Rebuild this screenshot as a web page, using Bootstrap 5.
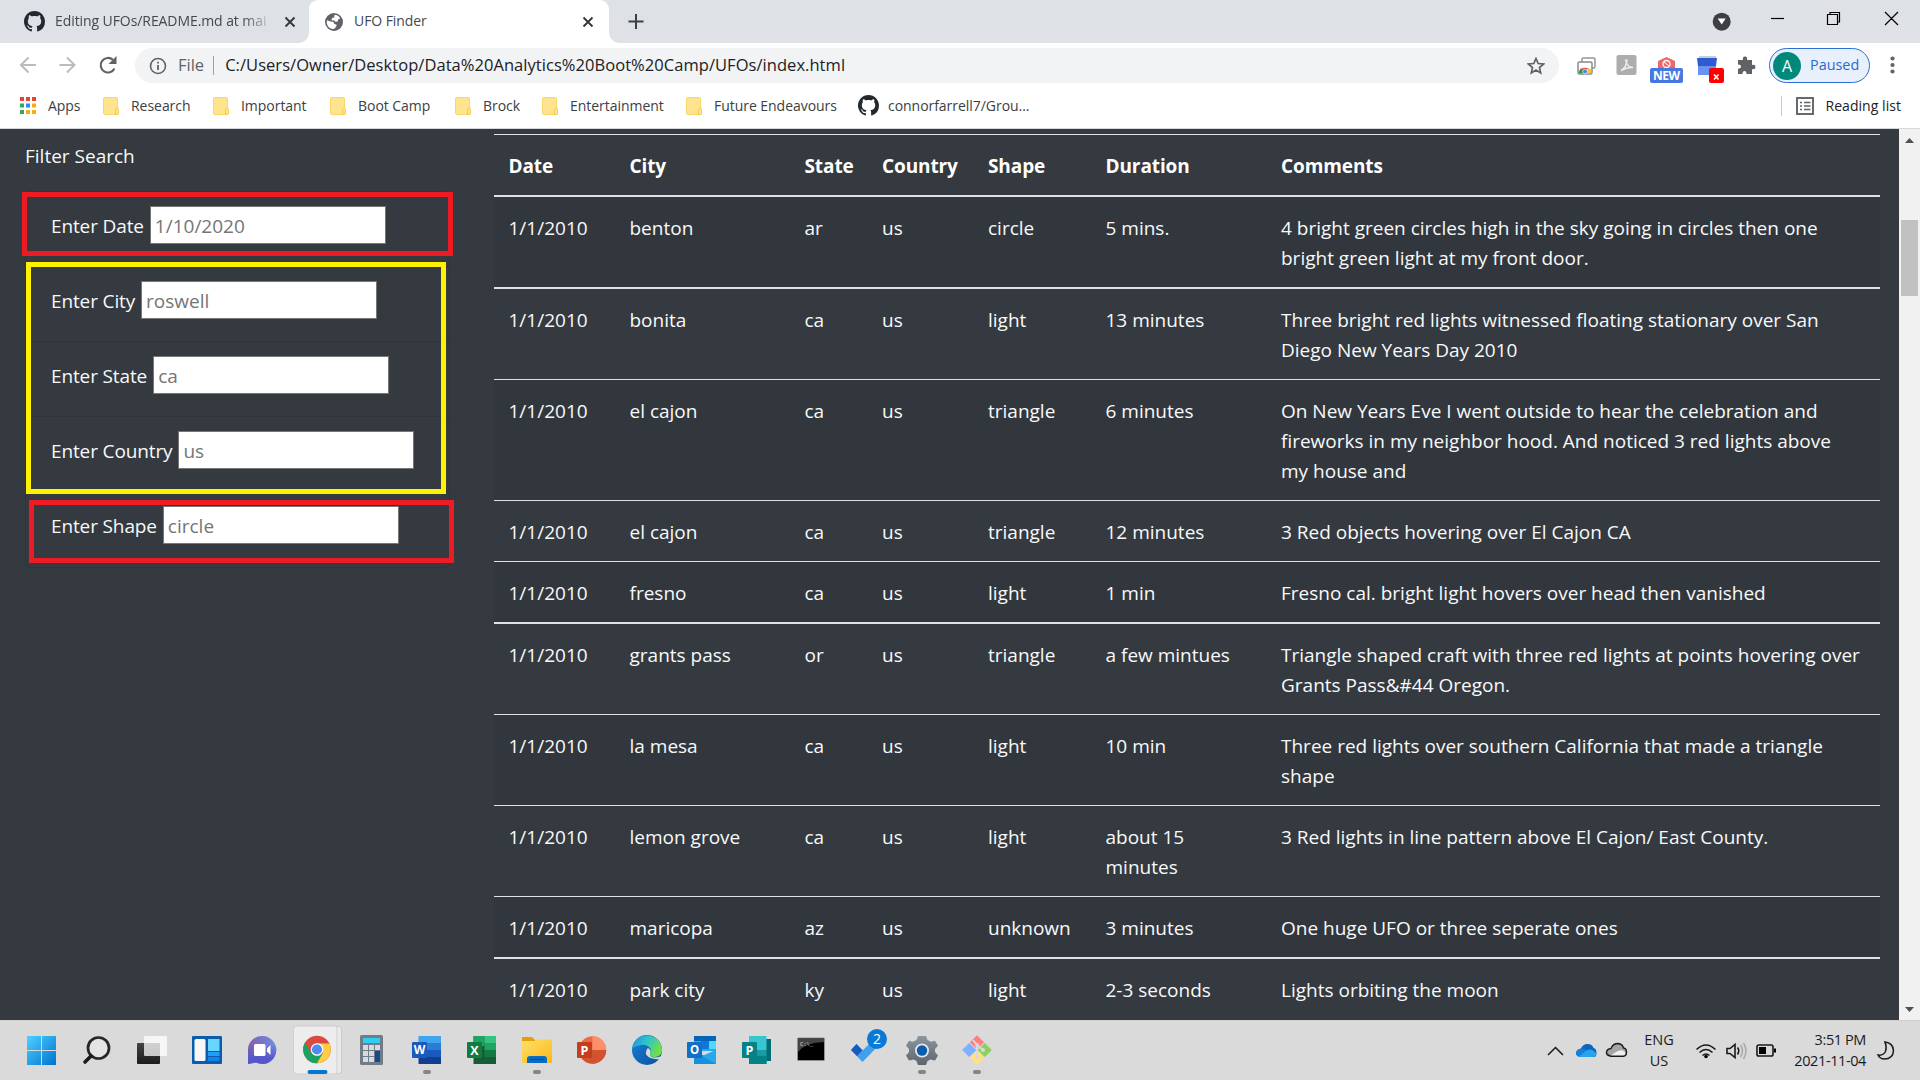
<!DOCTYPE html>
<html lang="en">
<head>
<meta charset="utf-8">
<title>UFO Finder</title>
<link href="https://cdn.jsdelivr.net/npm/bootstrap@5.3.0/dist/css/bootstrap.min.css" rel="stylesheet">
<style>
body{width:1920px;height:1080px;overflow:hidden;font-family:"Open Sans","Noto Sans",sans-serif;background:#343a40;color:#f8f9fa}
svg{display:block;flex:none}
.tabstrip{height:43px;background:#dee1e6;color:#45494d;font-size:14px}
.tab-idle{width:309px;padding-left:24px}
.tab-live{width:300px;background:#fff;border-radius:9px 9px 0 0;padding-left:15px;position:relative}
.tab-live::before,.tab-live::after{content:"";position:absolute;bottom:0;width:10px;height:10px}
.tab-live::before{left:-10px;background:radial-gradient(circle at 0 0,#dee1e6 9.5px,#fff 10px)}
.tab-live::after{right:-10px;background:radial-gradient(circle at 100% 0,#dee1e6 9.5px,#fff 10px)}
.tab-text{white-space:nowrap;overflow:hidden;line-height:22px;letter-spacing:-.08px;margin-left:10px;position:relative;top:-1px}
.fade-text{width:219px;-webkit-mask-image:linear-gradient(90deg,#000 188px,transparent 219px);mask-image:linear-gradient(90deg,#000 188px,transparent 219px)}
.tab-idle .tab-x{margin-left:10px}
.tab-live .tab-x{margin-right:15px}
.toolbar{height:45px;background:#fff;color:#202124}
.omnibox{width:1424px;height:35px;border-radius:18px;background:#f1f3f4;padding-left:14px;font-size:16.5px;white-space:nowrap}
.scheme{margin-left:11px;color:#5f6368}
.url-sep{width:1px;height:19px;background:#9aa0a6;margin:0 11px 0 9px}
.url{letter-spacing:.05px}
.star{margin-right:14px}
.pill{width:101px;height:35px;border:1.4px solid #2b6fd6;border-radius:18px;background:#e8f0fb;color:#2a6ad0;font-size:14.4px}
.pill-text{margin:-2px 0 0 9px}
.avatar{width:28px;height:28px;border-radius:50%;background:#00897b;color:#fff;font-size:16px;margin-left:3px}
.bookmarks{height:41px;background:#fff;border-bottom:1px solid #d5d7da;color:#3c4043;font-size:14px;padding:0 19px 5px 19px}
.bm-grid{display:grid;grid-template-columns:84px 110px 117px 125px 87px 144px 172px auto;white-space:nowrap;letter-spacing:-.04px}
.bm-grid>div{display:flex;align-items:center;gap:12px}
.bm-grid>.bm-repo{gap:9px}
.reading{color:#202124;letter-spacing:.05px}
.page-area{height:891px;font-size:19px;line-height:30px;background:#343a40}
.side{width:494px;padding:12px 0 0 25px;position:relative}
.side-title{height:49px}
.filter-box{width:425px;border:1px solid #2f343a;border-radius:5px;margin-top:1px}
.filter-row{height:75px;padding:14px 0 0 25px;border-bottom:1px solid #2f343a}
.filter-row:last-child{border-bottom:0}
.filter-row label{line-height:38px;padding-top:1px;margin-right:6px;white-space:nowrap;letter-spacing:-.13px}
.filter-row input{width:236px;height:38px;border:1.5px solid #767676;border-radius:0;padding:2px 4px 0;background:#fff;font:inherit;line-height:30px}
.filter-row input::placeholder{color:#757575;opacity:1}
.outline{position:absolute;border:5px solid #ed1c24;pointer-events:none}
.o1{left:22px;top:63px;width:431px;height:64px}
.o2{left:26px;top:133px;width:420px;height:232px;border-color:#fff200}
.o3{left:29px;top:371px;width:425px;height:63px}
.sight{width:1386px;margin-top:5px;table-layout:fixed;border-collapse:separate;border-spacing:0}
.sight th,.sight td{padding:16px 0 14px 14.5px;border-top:1px solid #dee2e6;vertical-align:top;white-space:nowrap;font-weight:400}
.sight th{font-weight:700;color:#fff;letter-spacing:-.1px}
.sight .thick td{border-top-width:2px}
.sight tbody tr:nth-child(odd){background:#32373d}
.c-date{width:121px}.c-city{width:175px}.c-state{width:77.5px}.c-country{width:106px}.c-shape{width:117.5px}.c-dur{width:175.5px}
.scroller{width:21px;background:#f1f1f1;padding-top:9px}
.thumb{width:17px;height:76px;margin:77px 0 711px 2px;background:#c1c1c1}
.taskbar{height:60px;background:#dadada;color:#1a1a1a;padding-left:14px;border-top:1px solid #cfcfcf}
.taskbar svg.app{margin-top:-1px}
.tray{font-size:14.5px;line-height:20.5px}
.tray-apps{overflow:visible}
.lang{width:66px}
.clock{width:78px;white-space:nowrap;letter-spacing:-.4px}
</style>
<script src="https://cdn.jsdelivr.net/npm/bootstrap@5.3.0/dist/js/bootstrap.bundle.min.js"></script>
</head>
<body>
<svg width="0" height="0" class="position-absolute">
<defs>
<symbol id="octo" viewBox="0 0 16 16"><path fill="#24292f" d="M8 0C3.58 0 0 3.58 0 8c0 3.54 2.29 6.53 5.47 7.59.4.07.55-.17.55-.38 0-.19-.01-.82-.01-1.49-2.01.37-2.53-.49-2.69-.94-.09-.23-.48-.94-.82-1.13-.28-.15-.68-.52-.01-.53.63-.01 1.08.58 1.23.82.72 1.21 1.87.87 2.33.66.07-.52.28-.87.51-1.07-1.78-.2-3.64-.89-3.64-3.95 0-.87.31-1.59.82-2.15-.08-.2-.36-1.02.08-2.12 0 0 .67-.21 2.2.82.64-.18 1.32-.27 2-.27s1.36.09 2 .27c1.53-1.04 2.2-.82 2.2-.82.44 1.1.16 1.92.08 2.12.51.56.82 1.27.82 2.15 0 3.07-1.87 3.75-3.65 3.95.29.25.54.73.54 1.48 0 1.07-.01 1.93-.01 2.2 0 .21.15.46.55.38A8.01 8.01 0 0 0 16 8c0-4.42-3.58-8-8-8z"/></symbol>
<symbol id="fold" viewBox="0 0 16 18"><rect x=".5" y=".5" width="14" height="17" rx="1.5" fill="#ffe48f" stroke="#fad764"/><path d="M12.5 17.5v-5q0-1.5 1.5-1.5t1.5 1.5v3.500q0 1.500-1.500 1.500z" fill="#ffe48f" stroke="#f5cc4e"/></symbol>
<symbol id="cross" viewBox="0 0 12 12"><path d="M1.500 1.500l9 9M10.500 1.500l-9 9" stroke="#35383b" stroke-width="1.900" fill="none"/></symbol>
<linearGradient id="wg" x1="0" y1="0" x2="1" y2="1"><stop offset="0" stop-color="#4fd0ff"/><stop offset="1" stop-color="#0073d0"/></linearGradient>
<linearGradient id="chatg" x1="0" y1="0" x2="1" y2="0"><stop offset="0" stop-color="#8360a8"/><stop offset="1" stop-color="#6d8de8"/></linearGradient>
<linearGradient id="chatb" x1="0" y1="0" x2="0" y2="1"><stop offset=".3" stop-color="#5756c8" stop-opacity="0"/><stop offset=".8" stop-color="#5558cc"/></linearGradient>
<linearGradient id="fg" x1="0" y1="0" x2="1" y2="1"><stop offset="0" stop-color="#ffdf6d"/><stop offset="1" stop-color="#fbb914"/></linearGradient>
<linearGradient id="eg" x1="0" y1="0" x2="1" y2=".4"><stop offset="0" stop-color="#1a8ed8"/><stop offset=".5" stop-color="#2fc2d0"/><stop offset="1" stop-color="#6be04a"/></linearGradient>
<linearGradient id="eb" x1="0" y1="0" x2="1" y2="1"><stop offset="0" stop-color="#1683dd"/><stop offset="1" stop-color="#0c4f99"/></linearGradient>
<linearGradient id="gg" x1="0" y1="0" x2="0" y2="1"><stop offset="0" stop-color="#8d969e"/><stop offset="1" stop-color="#5d666f"/></linearGradient>
<linearGradient id="dk" x1="0" y1="0" x2="0" y2="1"><stop offset="0" stop-color="#444"/><stop offset="1" stop-color="#1c1c1c"/></linearGradient>
</defs>
</svg>

<header>
<div class="tabstrip d-flex">
  <div class="tab-idle d-flex align-items-center">
    <svg width="21" height="21"><use href="#octo"/></svg>
    <div class="tab-text fade-text">Editing UFOs/README.md at mai</div>
    <svg class="tab-x" width="12" height="12"><use href="#cross"/></svg>
  </div>
  <div class="tab-live d-flex align-items-center">
    <svg width="20" height="20" viewBox="0 0 20 20"><circle cx="10" cy="10" r="9" fill="#5f6368"/><path fill="#fff" d="M10.500 2.800q3.800.2 5.800 3.600l-2 .8-.6 2.300-2.400.2-1.500-1.400-2.300.3.500-2.500 2.200-.6zM2.900 8.200l3.600 1.300 2.600.300 1.400 2.200 2 .400-.2 2.200-2.200 2.500q-5.800.200-7.300-5.600z"/></svg>
    <div class="tab-text flex-grow-1">UFO Finder</div>
    <svg class="tab-x" width="12" height="12"><use href="#cross"/></svg>
  </div>
  <svg width="48" height="43"><path d="M19.500 21.500h15M27 14v15" stroke="#3c4043" stroke-width="2"/></svg>
  <svg class="ms-auto" width="220" height="43"><circle cx="21.700" cy="21.700" r="9" fill="#3c4043"/><path d="M17.700 18.500h8l-4 6z" fill="#fff"/>
    <path d="M71 18.500h13" stroke="#000" stroke-width="1.200"/><path d="M127.500 14.500h10v10h-10zM130 14.500v-2h9.500v9.500h-2M185 12l13 13M198 12l-13 13" fill="none" stroke="#000" stroke-width="1.200"/></svg>
</div>

<div class="toolbar d-flex align-items-center">
  <svg width="135" height="45" fill="none" stroke="#babcbe" stroke-width="2"><path d="M36 22H21M28.500 14.500L21 22l7.500 7.500M59.500 22h15M67 14.500l7.500 7.500-7.500 7.500"/><path d="M114.500 25.500a7.300 7.300 0 1 1-1.600-8.700" stroke="#5f6368" stroke-width="2.100"/><path d="M116.500 13v8h-8z" fill="#5f6368" stroke="none"/></svg>
  <div class="omnibox d-flex align-items-center">
    <svg width="18" height="18" viewBox="0 0 18 18"><circle cx="9" cy="9" r="7.500" fill="none" stroke="#5f6368" stroke-width="1.600"/><path d="M9 8v5M9 4.800v1.800" stroke="#5f6368" stroke-width="1.800"/></svg>
    <span class="scheme">File</span><span class="url-sep"></span>
    <span class="url">C:/Users/Owner/Desktop/Data%20Analytics%20Boot%20Camp/UFOs/index.html</span>
    <svg class="star ms-auto" width="18" height="18" viewBox="0 0 18 18"><path d="M9 1.500l2.200 5 5.400.5-4.100 3.600 1.200 5.300L9 13.100l-4.700 2.800 1.200-5.300L1.400 7l5.400-.5z" fill="none" stroke="#5f6368" stroke-width="1.700"/></svg>
  </div>
  <svg width="210" height="45">
    <g><rect x="23" y="15" width="13" height="10" rx="1.500" fill="none" stroke="#90969b" stroke-width="1.500"/><rect x="19" y="19" width="14" height="12" rx="1.500" fill="#fff" stroke="#858b90" stroke-width="1.500"/><path d="M20.500 28a6 5.500 0 0 1 11 0z" fill="#dd4b3e"/><path d="M20 30.300q0-3 2-5l3 5z" fill="#199b58"/><path d="M28 25.500h3.500q1 2 .6 4.800H27z" fill="#f5c83a"/><circle cx="26" cy="28.500" r="2.300" fill="#4684ee" stroke="#fff" stroke-width=".6"/></g>
    <rect x="57.500" y="12" width="20" height="20" rx="2" fill="#adadad"/><path d="M62 27.500q5.500-3 6-11M66.500 16.500q1 7.500 7.500 8-6-.5-12 3" fill="none" stroke="#eee" stroke-width="1.500"/>
    <path d="M99 18l8.500-4 8.500 4v9H99z" fill="#ee6667"/><circle cx="107.500" cy="21" r="3.500" fill="none" stroke="#fff" stroke-width="1.300"/><path d="M105 19l5 4" stroke="#fff"/>
    <rect x="91" y="25" width="33" height="15" rx="2" fill="#4678e0"/><text x="107.500" y="37.300" font-size="12" font-weight="700" fill="#fff" text-anchor="middle" textLength="27">NEW</text>
    <path d="M140 13h17v6h-17z" fill="#c9cdd4"/><path d="M138 15h20l-1 8h-18z" fill="#2e5cd0"/><path d="M139 23h18v9h-18z" fill="#6793f3"/>
    <rect x="150" y="25" width="15" height="15" rx="2" fill="#f00"/><path d="M155 31.500l4.500 5M159.500 31.500l-4.500 5" stroke="#fff" stroke-width="1.500"/>
    <path fill="#5f6368" d="M179 17h5q-.8-3.500 2-3.500t2 3.500h5v5q3.500-.8 3.500 2t-3.500 2v5h-5.500q0-3-2-3t-2 3H179v-5.500q3 0 3-2t-3-2z"/>
  </svg>
  <div class="pill d-flex align-items-center"><span class="avatar d-flex align-items-center justify-content-center">A</span><span class="pill-text">Paused</span></div>
  <svg width="44" height="45" fill="#5f6368"><circle cx="22.500" cy="15.500" r="2.100"/><circle cx="22.500" cy="22" r="2.100"/><circle cx="22.500" cy="28.500" r="2.100"/></svg>
</div>

<div class="bookmarks d-flex align-items-center">
  <div class="bm-grid">
    <div><svg width="17" height="17"><path fill="#ea4335" d="M1 0h4v4H1zM7 0h4v4H7zM13 0h4v4h-4z"/><path fill="#34a853" d="M1 6.500h4v4H1zM1 13h4v4H1z"/><path fill="#2a8cf0" d="M7 6.500h4v4H7z"/><path fill="#fbab12" d="M13 6.500h4v4h-4zM7 13h4v4H7zM13 13h4v4h-4z"/></svg>Apps</div>
    <div><svg width="16" height="18"><use href="#fold"/></svg>Research</div>
    <div><svg width="16" height="18"><use href="#fold"/></svg>Important</div>
    <div><svg width="16" height="18"><use href="#fold"/></svg>Boot Camp</div>
    <div><svg width="16" height="18"><use href="#fold"/></svg>Brock</div>
    <div><svg width="16" height="18"><use href="#fold"/></svg>Entertainment</div>
    <div><svg width="16" height="18"><use href="#fold"/></svg>Future Endeavours</div>
    <div class="bm-repo"><svg width="21" height="21"><use href="#octo"/></svg>connorfarrell7/Grou...</div>
  </div>
  <svg class="ms-auto" width="52" height="22"><path d="M8.500 1v20" stroke="#c8cacd"/><g fill="none" stroke="#5f6368" stroke-width="1.900"><rect x="24" y="3" width="16" height="16"/><path d="M31 7.500h6.500M31 11h6.500M31 14.500h6.500M27 7.500h2M27 11h2M27 14.500h2" stroke-width="1.600"/></g></svg>
  <span class="reading">Reading list</span>
</div>
</header>

<main class="page-area d-flex">
  <section class="side">
    <div class="side-title">Filter Search</div>
    <div class="filter-box">
      <div class="filter-row d-flex align-items-start"><label>Enter Date</label><input placeholder="1/10/2020"></div>
      <div class="filter-row d-flex align-items-start"><label>Enter City</label><input placeholder="roswell"></div>
      <div class="filter-row d-flex align-items-start"><label>Enter State</label><input placeholder="ca"></div>
      <div class="filter-row d-flex align-items-start"><label>Enter Country</label><input placeholder="us"></div>
      <div class="filter-row d-flex align-items-start"><label>Enter Shape</label><input placeholder="circle"></div>
    </div>
    <div class="outline o1"></div><div class="outline o2"></div><div class="outline o3"></div>
  </section>
  <section class="flex-grow-1">
    <table class="sight">
      <colgroup><col class="c-date"><col class="c-city"><col class="c-state"><col class="c-country"><col class="c-shape"><col class="c-dur"><col></colgroup>
      <thead><tr><th>Date</th><th>City</th><th>State</th><th>Country</th><th>Shape</th><th>Duration</th><th>Comments</th></tr></thead>
      <tbody>
        <tr class="thick"><td>1/1/2010</td><td>benton</td><td>ar</td><td>us</td><td>circle</td><td>5 mins.</td><td>4 bright green circles high in the sky going in circles then one<br>bright green light at my front door.</td></tr>
        <tr class="thick"><td>1/1/2010</td><td>bonita</td><td>ca</td><td>us</td><td>light</td><td>13 minutes</td><td>Three bright red lights witnessed floating stationary over San<br>Diego New Years Day 2010</td></tr>
        <tr><td>1/1/2010</td><td>el cajon</td><td>ca</td><td>us</td><td>triangle</td><td>6 minutes</td><td>On New Years Eve I went outside to hear the celebration and<br>fireworks in my neighbor hood. And noticed 3 red lights above<br>my house and</td></tr>
        <tr><td>1/1/2010</td><td>el cajon</td><td>ca</td><td>us</td><td>triangle</td><td>12 minutes</td><td>3 Red objects hovering over El Cajon CA</td></tr>
        <tr><td>1/1/2010</td><td>fresno</td><td>ca</td><td>us</td><td>light</td><td>1 min</td><td>Fresno cal. bright light hovers over head then vanished</td></tr>
        <tr class="thick"><td>1/1/2010</td><td>grants pass</td><td>or</td><td>us</td><td>triangle</td><td>a few mintues</td><td>Triangle shaped craft with three red lights at points hovering over<br>Grants Pass&amp;#44 Oregon.</td></tr>
        <tr><td>1/1/2010</td><td>la mesa</td><td>ca</td><td>us</td><td>light</td><td>10 min</td><td>Three red lights over southern California that made a triangle<br>shape</td></tr>
        <tr><td>1/1/2010</td><td>lemon grove</td><td>ca</td><td>us</td><td>light</td><td>about 15<br>minutes</td><td>3 Red lights in line pattern above El Cajon/ East County.</td></tr>
        <tr><td>1/1/2010</td><td>maricopa</td><td>az</td><td>us</td><td>unknown</td><td>3 minutes</td><td>One huge UFO or three seperate ones</td></tr>
        <tr class="thick"><td>1/1/2010</td><td>park city</td><td>ky</td><td>us</td><td>light</td><td>2-3 seconds</td><td>Lights orbiting the moon</td></tr>
      </tbody>
    </table>
  </section>
  <div class="scroller">
    <svg width="21" height="5"><path d="M10.500 0L15 5H6z" fill="#505050"/></svg>
    <div class="thumb"></div>
    <svg width="21" height="5"><path d="M10.500 5L15 0H6z" fill="#505050"/></svg>
  </div>
</main>

<footer class="taskbar d-flex">
  <svg class="app" width="55" height="60"><path fill="url(#wg)" d="M13 16h29v29H13z"/><path d="M27.500 16v29M13 30.500h29" stroke="#dadada"/></svg>
  <svg class="app" width="55" height="60"><circle cx="29.500" cy="28" r="10.500" fill="#e4e4e4" stroke="#262626" stroke-width="2.700"/><path d="M22 36l-6 6" stroke="#1c1c1c" stroke-width="3.600" stroke-linecap="round"/></svg>
  <svg class="app" width="55" height="60"><rect x="13" y="23" width="23" height="21" rx="1" fill="url(#dk)"/><rect x="20" y="16" width="23" height="20" rx="1" fill="#fff" fill-opacity=".75"/></svg>
  <svg class="app" width="55" height="60"><rect x="13" y="16" width="30" height="28" rx="1" fill="#0b5cab"/><rect x="15.500" y="19" width="11" height="22" rx="1.500" fill="#f7f7f7"/><path d="M29 19h11.500v12H29z" fill="#68d5ff"/><path d="M29 32h11.500v4H29z" fill="#1fa0f8"/><path d="M29 37h11.500v4H29z" fill="#0f85ea"/></svg>
  <svg class="app" width="55" height="60"><path d="M28 16a14 14 0 1 1-6 26.500L14 44V30a14 14 0 0 1 14-14z" fill="url(#chatg)"/><path d="M28 16a14 14 0 1 1-6 26.500L14 44V30a14 14 0 0 1 14-14z" fill="url(#chatb)"/><rect x="20" y="24" width="11.500" height="12" rx="1.500" fill="#fff"/><path d="M33 28.500l3.500-3.500v10L33 31.500z" fill="#fff"/></svg>
  <svg class="app" width="55" height="60"><rect x="6" y="6.500" width="46.500" height="47" rx="3" fill="#eaeaea" stroke="#cacaca"/><rect x="4.500" y="6" width="43.500" height="48" rx="3" fill="#ededed" stroke="#cfcfcf"/><g transform="translate(28 29.500)"><circle r="13.800" fill="#db4a3e"/><path d="M-12 -6.900A13.800 13.800 0 0 0 0 13.800L6 3.400-6 3.400z" fill="#1aa260"/><path d="M0 13.800A13.800 13.800 0 0 0 12.400-6L0-6 6 3.400z" fill="#ffce42"/><circle r="6.300" fill="#fff"/><circle r="5.100" fill="#4c8bf5"/></g><rect x="18.500" y="50" width="20" height="4" rx="2" fill="#0078d7"/></svg>
  <svg class="app" width="55" height="60"><rect x="16" y="15" width="23" height="30" rx="1.500" fill="#717c86"/><path d="M19 18h17v5H19z" fill="#30cdf5"/><path d="M19 25h5v5h-5zM25 25h5v5h-5zM31 25h5v5h-5zM19 31h5v5h-5zM25 31h5v5h-5zM19 37h5v5h-5zM25 37h5v5h-5z" fill="#d4dbe1"/><path d="M31 31h5v11h-5z" fill="#104b91"/></svg>
  <svg class="app" width="55" height="60"><path d="M19.500 16h22.500v7H19.500z" fill="#41a5ee"/><path d="M19.500 23h22.500v7H19.500z" fill="#2b7cd3"/><path d="M19.500 30h22.500v7H19.500z" fill="#185abd"/><path d="M19.500 37h22.500v7H19.500z" fill="#103f91"/><rect x="13" y="22" width="15" height="16" rx="1" fill="#185abd"/><text x="20.500" y="34" fill="#fff" font-size="12" font-weight="700" text-anchor="middle">W</text><rect x="24" y="50" width="8" height="4" rx="2" fill="#858585"/></svg>
  <svg class="app" width="55" height="60"><path d="M19.500 16h22.500v28H19.500z" fill="#185c37"/><path d="M19.500 16h11v10h-11z" fill="#21a366"/><path d="M30.500 16H42v7H30.500z" fill="#33c481"/><path d="M30.500 23H42v7H30.500z" fill="#21a366"/><path d="M30.500 30H42v7H30.500z" fill="#107c41"/><rect x="13" y="22" width="15" height="16" rx="1" fill="#107c41"/><text x="20.500" y="34.500" fill="#fff" font-size="12.500" font-weight="700" text-anchor="middle">X</text></svg>
  <svg class="app" width="55" height="60"><path d="M13 17h10l3 3v6H13z" fill="#e0a008"/><path d="M13 21h13l1-1.500h16V43H13z" fill="url(#fg)"/><path d="M18 43v-4q0-3 3-3h14q3 0 3 3v4z" fill="#0a6cc4"/><path d="M21 39.500h14" stroke="#084f92" stroke-width="1.300"/><rect x="24" y="50" width="8" height="4" rx="2" fill="#858585"/></svg>
  <svg class="app" width="55" height="60"><circle cx="28.500" cy="30" r="13.700" fill="#ed6c47"/><path d="M28.500 16.300A13.700 13.700 0 0 1 42.200 30H28.500z" fill="#ff8f6b"/><path d="M42.200 30a13.700 13.700 0 0 1-26.500 5l12.800-5z" fill="#d35230"/><rect x="13" y="22" width="15" height="16" rx="1" fill="#c43e1c"/><text x="20.500" y="34.500" fill="#fff" font-size="12.500" font-weight="700" text-anchor="middle">P</text></svg>
  <svg class="app" width="55" height="60"><circle cx="28" cy="30" r="15" fill="url(#eb)"/><path d="M13.200 28A15 15 0 0 1 43 30q0 6-6.500 7-6.500.5-5.500-3 2.500-4-1-7-4-3.500-10-1.500-4.500 1.200-6.800 2.500z" fill="url(#eg)"/><path d="M31 34q-1 3.500 5.500 3.400 4 0 6-1.400-1.500 3.500-2 3-9 1-13.500-4.500-.5-4 2-6.500 4 2 2 6z" fill="#dadada"/></svg>
  <svg class="app" width="55" height="60"><path d="M20 16h22v14H20z" fill="#0364b8"/><path d="M20 21h22v10H20z" fill="#28a8ea"/><path d="M27 21h8v8h-8z" fill="#0f78d4"/><path d="M35 21h7v8h-7z" fill="#50d9ff"/><path d="M20 31l11 5 11-6v14H20z" fill="#1490df"/><path d="M42 30v14L28 36z" fill="#28a8ea"/><rect x="13" y="22" width="15" height="16" rx="1" fill="#0f6fc9"/><text x="20.500" y="34" fill="#fff" font-size="11.500" font-weight="700" text-anchor="middle">O</text></svg>
  <svg class="app" width="55" height="60"><path d="M36 19h6v22h-6z" fill="#026c70"/><path d="M20 16h17.500v14H20z" fill="#37c6d0"/><path d="M20 30h17.500v14H20z" fill="#1a9ba1"/><path d="M20 36h17.500v8H20z" fill="#058285"/><rect x="13" y="22" width="15" height="16" rx="1" fill="#038387"/><text x="20.500" y="34.500" fill="#fff" font-size="12.500" font-weight="700" text-anchor="middle">P</text></svg>
  <svg class="app" width="55" height="60"><rect x="13.500" y="18" width="27" height="22.500" rx="1" fill="#000" stroke="#8f9295"/><path d="M14 19h26v3q-18 0-26 10z" fill="#444"/><text x="16" y="26" font-family="Liberation Mono,monospace" font-size="5.500" fill="#ddd">C:\_</text></svg>
  <svg class="app" width="55" height="60"><path d="M12 30l5.500-6 6 6.500L36 18l5 6-17.500 18z" fill="#41a0ec"/><path d="M12 30l5.500-6 6 6.300-5.500 5.700z" fill="#185abd"/><circle cx="38" cy="19" r="10" fill="#0a78d6"/><text x="38" y="24.300" font-size="14" fill="#fff" text-anchor="middle">2</text></svg>
  <svg class="app" width="55" height="60"><path d="M24 16h8l1.500 4 3.500 1.800 4-1 3 5-3 3.200v3l3 3.500-3 5-4.500-1-3 1.500-1.500 4h-8l-1.500-4-3-1.500-4.500 1-3-5 3-3.500v-3l-3-3.200 3-5 4 1L22.500 20z" fill="url(#gg)"/><circle cx="28" cy="30.500" r="7" fill="#e6e9eb"/><circle cx="28" cy="30.500" r="5.200" fill="#0b5cab"/><rect x="24" y="50" width="8" height="4" rx="2" fill="#858585"/></svg>
  <svg class="app" width="55" height="60"><g transform="translate(28 30) rotate(45)"><path fill="#fd7f7f" d="M-10.500-10.500h10v10h-10z"/><path fill="#8bd15c" d="M.500-10.500h10v10H.500z"/><path fill="#7fb0ff" d="M-10.500.500h10v10h-10z"/><path fill="#ffe27e" d="M.500.500h10v10H.500z"/></g><path d="M24 20l4 5v13M28 25l6 5" stroke="#dadada" stroke-width="2" fill="none"/><circle cx="28" cy="25" r="2" fill="#dadada"/><circle cx="34" cy="30" r="2" fill="#dadada"/><circle cx="28" cy="37" r="2" fill="#dadada"/><rect x="24" y="50" width="8" height="4" rx="2" fill="#858585"/></svg>
  <div class="tray d-flex ms-auto align-items-center">
    <svg class="tray-apps" width="86" height="60"><path d="M8 34l7.500-7.500L23 34" fill="none" stroke="#1a1a1a" stroke-width="1.500"/><path d="M40 36q-4-1-4-4 .5-4 5-4.500 2-5 7.500-4.500 4 .5 5 4 3 .500 3 5t-3 4z" fill="#0a66bf"/><path d="M40 36q-4-1-4-4 .5-4 5-4 4-1 6 1.500L40 36z" fill="#1180dc"/><path d="M38 36l8-6q5-3 8 .5 2.500 1 2 3.500-.7 2-3 2z" fill="#28a4ea"/><path d="M70 35q-4-1-3.500-4 .5-3 4.500-3.500 2-5 7-5 4.500.5 5.500 4.500 3 .500 3 4.200t-3 4H71z" fill="#a5a5a5"/><path d="M70 35l6-4q6-3.500 9 0 1 4-2 4z" fill="#efefef"/><path d="M71 35.200q-5-1-4.500-4.200 .5-3 4.500-3.500 2-5 7-5 4.500.5 5.500 4.500 3 .500 3 4.200t-3 4z" fill="none" stroke="#1c1c1c" stroke-width="1.400"/></svg>
    <div class="lang text-center">ENG<br>US</div>
    <svg width="96" height="60"><g fill="none" stroke="#1a1a1a" stroke-width="1.600"><path d="M4.500 28.500q9.500-9 19 0M7.500 31.500q6.500-6 13 0M10.500 34.500q3.500-3 7 0"/><path d="M35 27.500h3l5-4v13l-5-4h-3z"/><path d="M45.500 26.500q2.500 3 0 7"/><path d="M48.500 24q4 6 0 12M51.500 22q5 8 0 16" stroke="#aaa"/><rect x="65" y="24" width="16" height="11" rx="1.800"/></g><circle cx="14" cy="35.500" r="1.800"/><path d="M67 26h7v7h-7zM82 27.500h2v4h-2z"/></svg>
    <div class="clock text-end">3:51 PM<br>2021-11-04</div>
    <svg width="54" height="60"><path d="M19 21q8 1 8.500 8.500Q27 38 18.500 38 14 38 12 34q5 1 7.500-3.500Q21 26 19 21z" fill="none" stroke="#1a1a1a" stroke-width="1.500"/></svg>
  </div>
</footer>
</body>
</html>
